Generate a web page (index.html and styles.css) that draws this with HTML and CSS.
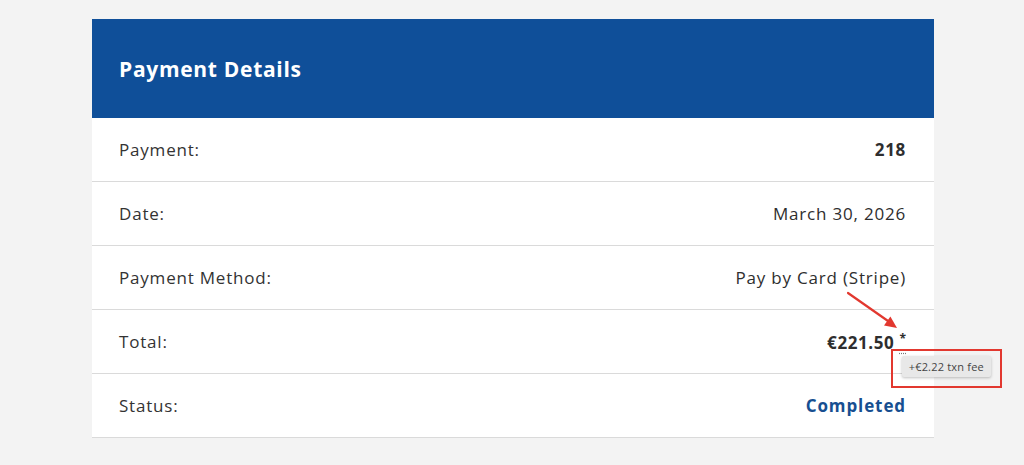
FILE: index.html
```html
<!DOCTYPE html>
<html>
<head>
<meta charset="utf-8">
<link rel="stylesheet" href="styles.css">
</head>
<body>
<div class="page">
  <div class="card">
    <div class="card-header">
      <h2 class="title">Payment Details</h2>
    </div>
    <div class="row">
      <span class="label">Payment:</span>
      <span class="value strong">218</span>
    </div>
    <div class="row">
      <span class="label">Date:</span>
      <span class="value">March 30, 2026</span>
    </div>
    <div class="row">
      <span class="label">Payment Method:</span>
      <span class="value">Pay by Card (Stripe)</span>
    </div>
    <div class="row">
      <span class="label">Total:</span>
      <span class="value strong total">€221.50 <abbr class="fee-mark" title="+€2.22 txn fee">*</abbr></span>
      <span class="tooltip">+€2.22 txn fee</span>
      <span class="annot-box"></span>
      <svg class="annot-arrow" width="60" height="45" viewBox="0 0 60 45">
        <line x1="3" y1="3" x2="43" y2="31" stroke="#e2382f" stroke-width="2.2" stroke-linecap="round"/>
        <polygon points="52,38 39,35.5 45.4,26.5" fill="#e2382f"/>
      </svg>
    </div>
    <div class="row">
      <span class="label">Status:</span>
      <span class="value status">Completed</span>
    </div>
  </div>
</div>
</body>
</html>
```

FILE: styles.css
```css
html, body {
  margin: 0;
  padding: 0;
  background: #f3f3f3;
}
body {
  font-family: "Open Sans", "DejaVu Sans", sans-serif;
  color: #2e2e2e;
}
.page {
  padding: 19px 0 0 92px;
}
.card {
  width: 842px;
  background: #ffffff;
}
.card-header {
  background: #0f4f99;
  height: 99px;
  display: flex;
  align-items: center;
  padding: 0 27px;
}
.title {
  margin: 0;
  color: #ffffff;
  font-size: 21px;
  font-weight: 700;
  letter-spacing: 0.7px;
}
.row {
  position: relative;
  display: flex;
  justify-content: space-between;
  align-items: center;
  height: 63px;
  padding: 0 28px 0 27px;
  border-bottom: 1px solid #dadada;
  font-size: 17px;
  letter-spacing: 0.8px;
}
.label {
  color: #333333;
}
.value {
  color: #2e2e2e;
}
.strong {
  font-weight: 700;
  letter-spacing: 0.7px;
}
.total {
  letter-spacing: 0.6px;
}
.fee-mark {
  font-size: 12px;
  vertical-align: 6px;
  text-decoration: underline dotted #777;
  text-underline-offset: 10px;
  cursor: help;
  font-weight: 700;
  letter-spacing: 0;
}
.tooltip {
  position: absolute;
  right: -57px;
  top: 46px;
  background: #e8e8e8;
  color: #444;
  font-size: 11px;
  font-weight: 400;
  letter-spacing: 0.2px;
  padding: 3px 7px;
  border-radius: 2px;
  box-shadow: 0 1px 3px rgba(0,0,0,0.25);
  white-space: nowrap;
}
.annot-box {
  position: absolute;
  right: -68px;
  top: 39px;
  width: 107px;
  height: 35px;
  border: 2px solid #e2382f;
}
.annot-arrow {
  position: absolute;
  left: 753px;
  top: -20px;
}
.status {
  color: #174f91;
  font-weight: 700;
  letter-spacing: 0.9px;
}
```
